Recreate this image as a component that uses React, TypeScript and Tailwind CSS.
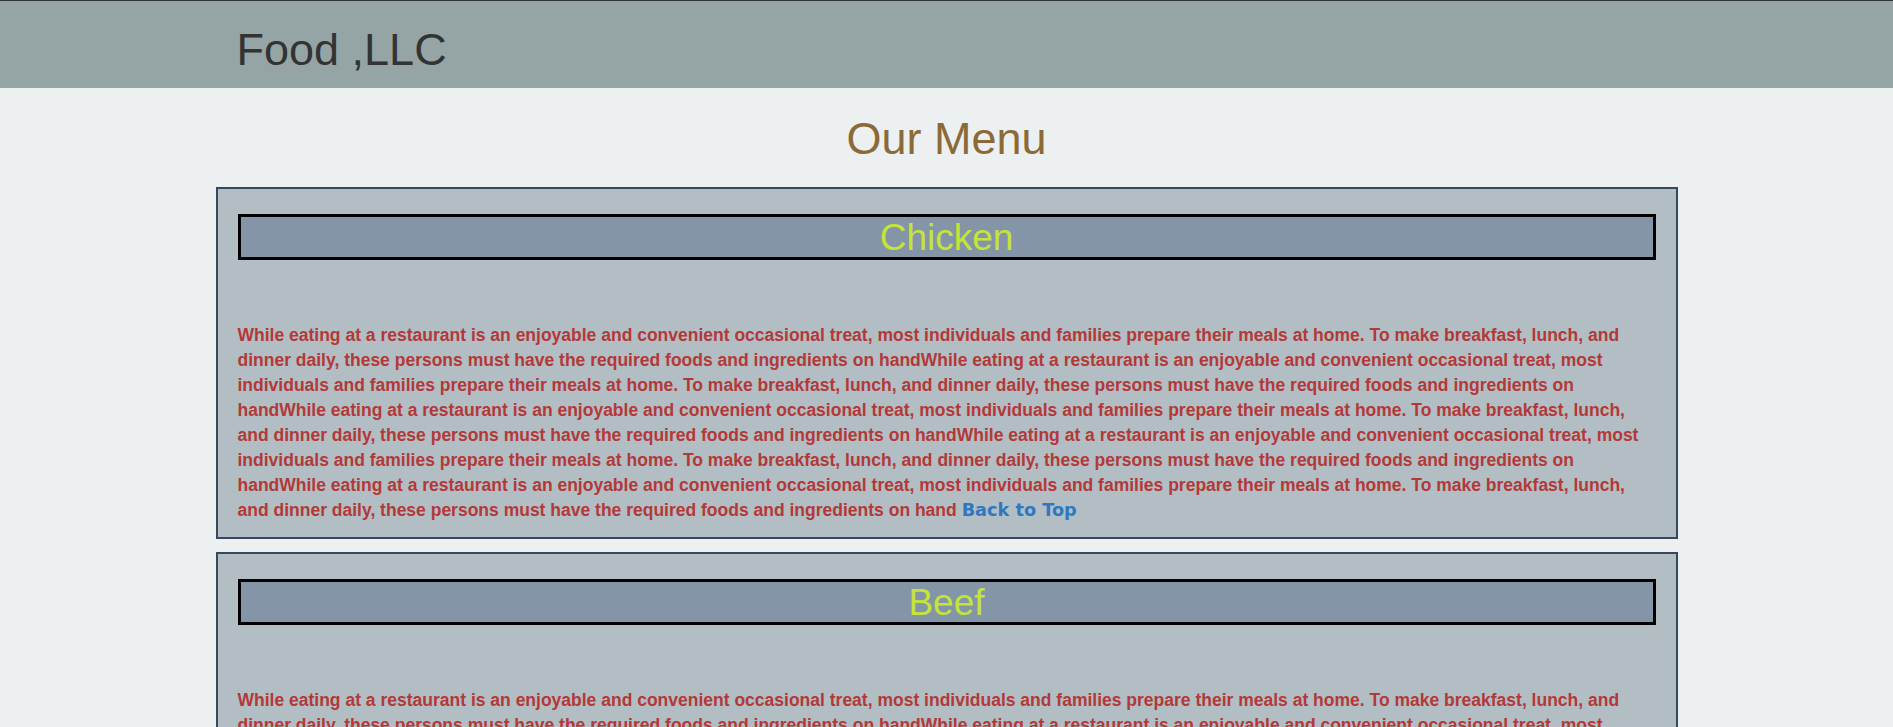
const blurb =
  "While eating at a restaurant is an enjoyable and convenient occasional treat, most individuals and families prepare their meals at home. To make breakfast, lunch, and dinner daily, these persons must have the required foods and ingredients on hand";

const menu = ["Chicken", "Beef", "Fish"];

function MenuCard({ title }: { title: string }) {
  return (
    <section className="border-2 border-[#34495e] bg-[#b2bec3] px-[20px] pt-[25px] pb-[14px]">
      <h3 className="border-[3px] border-black bg-[#8395a7] pt-px text-center text-[37px] leading-[39px] text-[#c4e538]">
        {title}
      </h3>
      <p className="mt-[63px] text-[17.5px] font-bold leading-[25px] text-[#b33939]">
        {blurb.repeat(5)}{" "}
        <a
          href="#top"
          className="font-['DejaVu_Sans',Verdana,sans-serif] text-[17.7px] font-bold text-[#2f78c0]"
        >
          Back to Top
        </a>
      </p>
    </section>
  );
}

export default function App() {
  return (
    <div id="top" className="min-h-screen bg-[#ecf0f1] font-['Liberation_Sans',Arial,sans-serif]">
      <header className="h-[88px] border-t border-[#2d3436] bg-[#95a5a6]">
        <div className="mx-auto w-[1462px] px-[21px] pt-[23px]">
          <h1 className="text-[45px] leading-[52px] text-[#333]">Food ,LLC</h1>
        </div>
      </header>

      <h2 className="pt-[25px] pb-[23px] text-center text-[45px] leading-[51px] text-[#8b6a37]">
        Our Menu
      </h2>

      <main className="mx-auto flex w-[1462px] flex-col gap-[13px] pb-10">
        {menu.map((item) => (
          <MenuCard key={item} title={item} />
        ))}
      </main>
    </div>
  );
}
